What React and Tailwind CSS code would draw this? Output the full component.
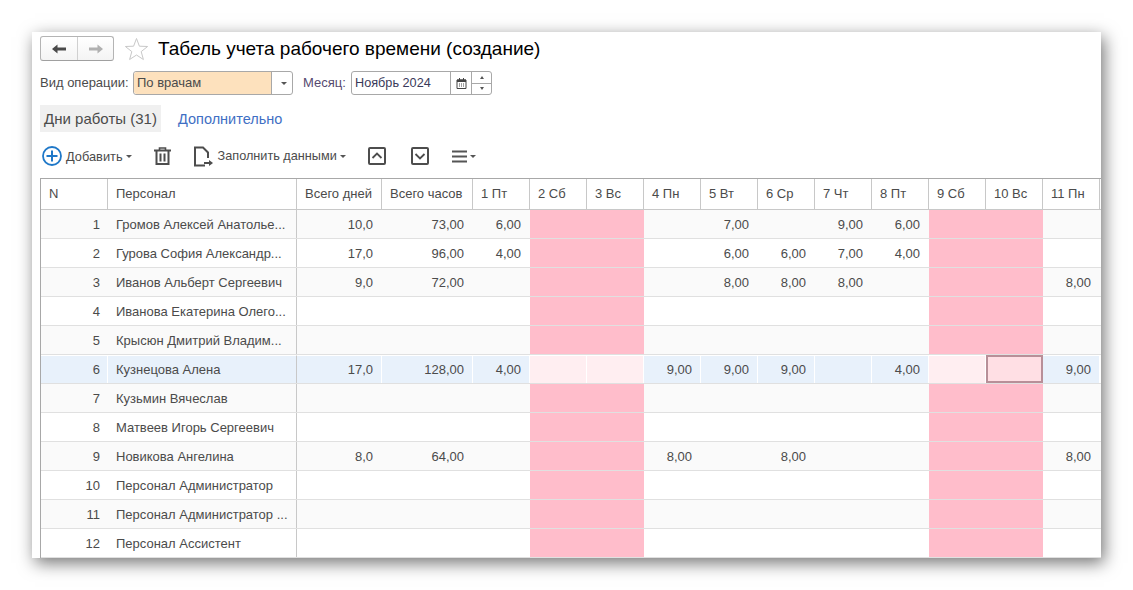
const font = { fontFamily: '"Liberation Sans", Arial, sans-serif' }

const columns = ["Всего дней", "Всего часов", "1 Пт", "2 Сб", "3 Вс", "4 Пн", "5 Вт", "6 Ср", "7 Чт", "8 Пт", "9 Сб", "10 Вс", "11 Пн"]
const widths = ["w-[85px]", "w-[91px]", "w-[57px]", "w-[57px]", "w-[57px]", "w-[57px]", "w-[57px]", "w-[57px]", "w-[57px]", "w-[57px]", "w-[57px]", "w-[57px]", "w-[57px]"]
const weekend = [3, 4, 10, 11]

const rows = [
  { n: 1, name: "Громов Алексей Анатолье...", v: { 0: "10,0", 1: "73,00", 2: "6,00", 6: "7,00", 8: "9,00", 9: "6,00" } },
  { n: 2, name: "Гурова София Александр...", v: { 0: "17,0", 1: "96,00", 2: "4,00", 6: "6,00", 7: "6,00", 8: "7,00", 9: "4,00" } },
  { n: 3, name: "Иванов Альберт Сергеевич", v: { 0: "9,0", 1: "72,00", 6: "8,00", 7: "8,00", 8: "8,00", 12: "8,00" } },
  { n: 4, name: "Иванова Екатерина Олего...", v: {} },
  { n: 5, name: "Крысюн Дмитрий Владим...", v: {} },
  { n: 6, name: "Кузнецова Алена", selected: true, v: { 0: "17,0", 1: "128,00", 2: "4,00", 5: "9,00", 6: "9,00", 7: "9,00", 9: "4,00", 12: "9,00" } },
  { n: 7, name: "Кузьмин Вячеслав", v: {} },
  { n: 8, name: "Матвеев Игорь Сергеевич", v: {} },
  { n: 9, name: "Новикова Ангелина", v: { 0: "8,0", 1: "64,00", 5: "8,00", 7: "8,00", 12: "8,00" } },
  { n: 10, name: "Персонал Администратор", v: {} },
  { n: 11, name: "Персонал Администратор ...", v: {} },
  { n: 12, name: "Персонал Ассистент", v: {} },
]

function Caret() {
  return <span className="ml-[3px] inline-block h-0 w-0 border-x-[3px] border-t-[3px] border-x-transparent border-t-[#555]" />
}

function Row({ row, index }) {
  const stripe = index % 2 === 0 ? "bg-[#fafafa]" : "bg-white"
  if (row.selected) {
    return (
      <div className="flex h-[29px] border-b border-[#e0e0e0] bg-white">
        <div className="flex w-[67px] shrink-0 items-center justify-end border-t border-r border-white bg-[#e8f1fb] pr-[7px]">{row.n}</div>
        <div className="flex w-[189px] shrink-0 items-center border-r border-t border-r-[#c8c8c8] border-t-white bg-[#e8f1fb] pl-[8px]">{row.name}</div>
        {columns.map((c, i) => {
          const isWeekend = weekend.includes(i)
          const current = i === 11
          return (
            <div
              key={c}
              className={
                "flex shrink-0 items-center justify-end pr-[8px] " + widths[i] + " " +
                (current
                  ? "border-2 border-[#b88f98] bg-[#ffdfe4]"
                  : isWeekend
                  ? "border-t border-r border-white bg-[#ffeef1]"
                  : "border-t border-r border-white bg-[#e8f1fb]")
              }
            >
              {row.v[i]}
            </div>
          )
        })}
      </div>
    )
  }
  return (
    <div className={"flex h-[29px] border-b border-[#e0e0e0] " + stripe}>
      <div className="flex w-[67px] shrink-0 items-center justify-end pr-[8px] pt-px">{row.n}</div>
      <div className="flex w-[189px] shrink-0 items-center border-r border-[#c8c8c8] pl-[8px] pt-px">{row.name}</div>
      {columns.map((c, i) => (
        <div
          key={c}
          className={
            "flex shrink-0 items-center justify-end pr-[9px] pt-px " + widths[i] + " " +
            (weekend.includes(i) ? "bg-[#ffbdcb]" : "")
          }
        >
          {row.v[i]}
        </div>
      ))}
    </div>
  )
}

export default function App() {
  return (
    <div className="h-[590px] w-[1133px] overflow-hidden bg-white pl-[32px] pt-[32px] text-[13px] text-[#4b4b4b]" style={font}>
      <div className="h-[526px] w-[1069px] overflow-hidden bg-white pl-[8px] pt-[4px] shadow-[3px_5px_16px_rgba(0,0,0,0.55)]">
        {/* title */}
        <div className="flex h-[25px] items-center">
          <div className="flex h-[25px] w-[74px] rounded-[3px] border border-[#b4b4b4] border-b-[#a0a0a0] bg-gradient-to-b from-white to-[#f4f4f4]">
            <div className="flex w-[37px] items-center justify-center border-r border-[#d0d0d0]">
              <svg width="14" height="10" viewBox="0 0 14 10"><path d="M0 5 5.5 0.5V3.5H14V6.5H5.5V9.5Z" fill="#4a4a4a" /></svg>
            </div>
            <div className="flex flex-1 items-center justify-center">
              <svg width="14" height="10" viewBox="0 0 14 10"><path d="M14 5 8.5 0.5V3.5H0V6.5H8.5V9.5Z" fill="#b0b0b0" /></svg>
            </div>
          </div>
          <svg className="ml-[10px]" width="25" height="24" viewBox="0 0 25 24">
            <path d="M12.5 1.5 15.4 9.2 23.6 9.5 17.2 14.6 19.4 22.5 12.5 18 5.6 22.5 7.8 14.6 1.4 9.5 9.6 9.2Z" fill="none" stroke="#c8c8c8" strokeWidth="1" />
          </svg>
          <div className="ml-[9px] pt-[2px] text-[19px] text-black">Табель учета рабочего времени (создание)</div>
        </div>

        {/* filters */}
        <div className="mt-[10px] flex h-[24px] items-center">
          <span className="w-[93px] shrink-0">Вид операции:</span>
          <div className="flex h-[24px] w-[160px] rounded-[3px] border border-[#a8a8a8]">
            <div className="flex flex-1 items-center rounded-l-[3px] bg-[#fde1bd] pl-[3px]">По врачам</div>
            <div className="flex w-[21px] items-center justify-center border-l border-[#a8a8a8]"><Caret /></div>
          </div>
          <span className="ml-[10px] w-[48px] shrink-0 text-[#56496f]">Месяц:</span>
          <div className="flex h-[24px] w-[141px] rounded-[3px] border border-[#a8a8a8]">
            <div className="flex w-[98px] items-center pl-[3px] pt-px text-[12.7px] text-[#3a3a5a]">Ноябрь 2024</div>
            <div className="flex w-[21px] items-center justify-center border-l border-[#a8a8a8]">
              <svg width="11" height="11" viewBox="0 0 11 11">
                <path d="M1 2h9v8.5H1Z" fill="none" stroke="#444" />
                <path d="M1 1.5h9V4H1Z M3 0h1v2H3Z M7 0h1v2H7Z" fill="#444" />
                <path d="M3 5.5h1v1H3Z M5 5.5h1v1H5Z M7 5.5h1v1H7Z M3 7.5h1v1H3Z M5 7.5h1v1H5Z M7 7.5h1v1H7Z" fill="#444" />
              </svg>
            </div>
            <div className="flex flex-1 flex-col border-l border-[#a8a8a8]">
              <div className="flex flex-1 items-center justify-center border-b border-[#a8a8a8]">
                <span className="h-0 w-0 border-x-[2px] border-b-[3px] border-x-transparent border-b-[#555]" />
              </div>
              <div className="flex flex-1 items-center justify-center">
                <span className="h-0 w-0 border-x-[2px] border-t-[3px] border-x-transparent border-t-[#555]" />
              </div>
            </div>
          </div>
        </div>

        {/* tabs */}
        <div className="mt-[10px] flex h-[27px] items-center">
          <div className="flex h-[27px] w-[121px] items-center justify-center bg-[#f0f0f0] pt-[2px] text-[15px]">Дни работы (31)</div>
          <div className="ml-[17px] pt-[2px] text-[14.5px] text-[#3f6fc4]">Дополнительно</div>
        </div>

        {/* toolbar */}
        <div className="flex h-[46px] items-center pt-[2px]">
          <svg className="ml-[2px] shrink-0" width="20" height="20" viewBox="0 0 20 20">
            <circle cx="10" cy="10" r="9" fill="none" stroke="#1f78c8" strokeWidth="1.8" />
            <path d="M10 4.5v11M4.5 10h11" stroke="#1f78c8" strokeWidth="2" />
          </svg>
          <span className="ml-[4px] pt-px text-[12.8px]">Добавить</span>
          <Caret />
          <svg className="ml-[22px] shrink-0" width="17" height="18" viewBox="0 0 17 18" fill="none" stroke="#4d4d4d">
            <path d="M0 3.5h17" strokeWidth="2" />
            <path d="M5.5 3V1h6v2" strokeWidth="1.6" />
            <path d="M2.5 4v13h12V4" strokeWidth="2" />
            <path d="M6.5 6.5v8M10.5 6.5v8" strokeWidth="2" />
          </svg>
          <svg className="ml-[22px] shrink-0" width="20" height="21" viewBox="0 0 20 21" fill="none" stroke="#4d4d4d">
            <path d="M12 19.5H2V1.5H10L15 6.5V12" strokeWidth="2" />
            <path d="M11 17H17" strokeWidth="2" />
            <path d="M16 14 20 17 16 20Z" fill="#4d4d4d" stroke="none" />
          </svg>
          <span className="ml-[5px] pt-px text-[12.7px]">Заполнить данными</span>
          <Caret />
          <svg className="ml-[22px] shrink-0" width="18" height="18" viewBox="0 0 18 18" fill="none" stroke="#4d4d4d">
            <rect x="1" y="1" width="16" height="16" rx="1" strokeWidth="2" />
            <path d="M4.5 11 9 6.5 13.5 11" strokeWidth="1.8" />
          </svg>
          <svg className="ml-[25px] shrink-0" width="18" height="18" viewBox="0 0 18 18" fill="none" stroke="#4d4d4d">
            <rect x="1" y="1" width="16" height="16" rx="1" strokeWidth="2" />
            <path d="M4.5 7 9 11.5 13.5 7" strokeWidth="1.8" />
          </svg>
          <svg className="ml-[23px] shrink-0" width="15" height="13" viewBox="0 0 15 13" stroke="#555" strokeWidth="1.8">
            <path d="M0 1.5h15M0 6.5h15M0 11.5h15" />
          </svg>
          <Caret />
        </div>

        {/* table */}
        <div className="w-[1061px] border-l border-t border-[#a8a8a8]">
          <div className="flex h-[31px] w-[1060px] border-b border-[#c8c8c8]">
            <div className="flex w-[67px] shrink-0 items-center border-r border-[#c8c8c8] pl-[8px]">N</div>
            <div className="flex w-[189px] shrink-0 items-center border-r border-[#c8c8c8] pl-[8px]">Персонал</div>
            {columns.map((c, i) => (
              <div key={c} className={"flex shrink-0 items-center border-r border-[#c8c8c8] pl-[8px] " + widths[i]}>{c}</div>
            ))}
          </div>
          {rows.map((r, i) => <Row key={r.n} row={r} index={i} />)}
        </div>
      </div>
    </div>
  )
}
